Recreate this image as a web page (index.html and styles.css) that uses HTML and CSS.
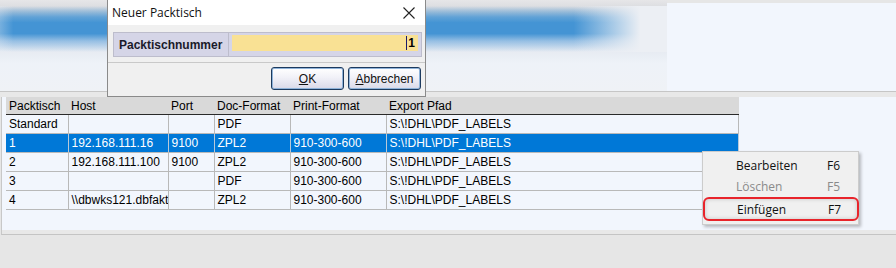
FILE: index.html
```html
<!DOCTYPE html>
<html lang="de">
<head>
    <meta charset="UTF-8">
    <title>Packtische</title>
    <link rel="stylesheet" href="styles.css">
</head>
<body>
    <div class="top">
        <div class="blur-area">
            <div class="blue-band"></div>
        </div>
        <div class="right-area"></div>
    </div>
    <div class="gap"></div>

    <div class="panel">
        <table class="grid">
            <colgroup>
                <col style="width:62px">
                <col style="width:100px">
                <col style="width:46px">
                <col style="width:76px">
                <col style="width:96px">
                <col style="width:352px">
            </colgroup>
            <thead>
                <tr>
                    <th>Packtisch</th>
                    <th>Host</th>
                    <th>Port</th>
                    <th>Doc-Format</th>
                    <th>Print-Format</th>
                    <th>Export Pfad</th>
                </tr>
            </thead>
            <tbody>
                <tr>
                    <td>Standard</td><td></td><td></td><td>PDF</td><td></td><td>S:\!DHL\PDF_LABELS</td>
                </tr>
                <tr class="selected">
                    <td>1</td><td>192.168.111.16</td><td>9100</td><td>ZPL2</td><td>910-300-600</td><td>S:\!DHL\PDF_LABELS</td>
                </tr>
                <tr>
                    <td>2</td><td>192.168.111.100</td><td>9100</td><td>ZPL2</td><td>910-300-600</td><td>S:\!DHL\PDF_LABELS</td>
                </tr>
                <tr>
                    <td>3</td><td></td><td></td><td>PDF</td><td>910-300-600</td><td>S:\!DHL\PDF_LABELS</td>
                </tr>
                <tr>
                    <td>4</td><td>\\dbwks121.dbfakt</td><td></td><td>ZPL2</td><td>910-300-600</td><td>S:\!DHL\PDF_LABELS</td>
                </tr>
            </tbody>
        </table>
    </div>
    <div class="panel-foot"></div>

    <!-- dialog over the page -->
    <div class="dialog">
        <div class="dialog-title">
            <span>Neuer Packtisch</span>
            <svg class="close" width="12" height="12" viewBox="0 0 12 12">
                <path d="M0.5 0.5 L11.5 11.5 M11.5 0.5 L0.5 11.5" stroke="#222" stroke-width="1.1" fill="none"/>
            </svg>
        </div>
        <div class="dialog-body">
            <div class="field">
                <div class="field-label">Packtischnummer</div>
                <div class="field-input-wrap">
                    <div class="field-input"><span class="caret"></span>1</div>
                </div>
            </div>
        </div>
        <div class="dialog-buttons">
            <button class="btn"><u>O</u>K</button>
            <button class="btn"><u>A</u>bbrechen</button>
        </div>
    </div>

    <!-- context menu -->
    <div class="menu">
        <div class="menu-item"><span class="menu-label">Bearbeiten</span><span>F6</span></div>
        <div class="menu-item disabled"><span class="menu-label">Löschen</span><span>F5</span></div>
        <div class="menu-item marked"><span class="menu-label">Einfügen</span><span>F7</span></div>
    </div>
</body>
</html>
```

FILE: styles.css
```css
/* Page */
body {
    margin: 0;
    width: 896px;
    height: 268px;
    overflow: hidden;
    position: relative;
    background: #e6e6e6;
    font-family: 'Liberation Sans', Arial, sans-serif;
    font-size: 12px;
    color: #000;
}

/* Blurred top area */
.top {
    display: flex;
    height: 91px;
    border-bottom: 1px solid #c6c6c6;
}

.blur-area {
    display: flex;
    width: 667px;
    padding-top: 6px;
    align-items: flex-start;
    background: linear-gradient(#e6e6e8 0%, #d3d6db 14%, #e3e8ef 50%, #eef2f8 70%, #eff2f6 100%);
}

.blue-band {
    width: 667px;
    height: 46px;
    background:
        linear-gradient(to right, rgba(236, 240, 246, 0.3) 0%, rgba(236, 240, 246, 0) 2%, rgba(236, 240, 246, 0) 86%, #eceff4 96%),
        linear-gradient(rgba(68, 148, 212, 0) 0%, rgba(68, 148, 212, 0.8) 24%, #4494d4 36%, #4494d4 60%, rgba(100, 165, 222, 0.6) 76%, rgba(120, 175, 225, 0) 100%);
}

.right-area {
    flex: 1;
    margin-top: 3px;
    background: #f2f6fd;
}

.gap {
    height: 5px;
    background: #e8e8e8;
}

/* Grid panel */
.panel {
    height: 133px;
    margin-left: 1px;
    padding-left: 4px;
    border-left: 1px solid #c8c8c8;
    background: #f2f6fd;
}

.panel-foot {
    height: 4px;
    margin-left: 1px;
    border-left: 1px solid #c8c8c8;
    border-bottom: 1px solid #c4c4c4;
    background: #e8e8e8;
}

.grid {
    border-collapse: collapse;
    table-layout: fixed;
    width: 732px;
}

.grid th {
    height: 17px;
    padding: 0 0 0 3px;
    background: #d9d9d9;
    border-bottom: 1px solid #2a2a2a;
    font-weight: normal;
    text-align: left;
    white-space: nowrap;
}

.grid th:last-child {
    border-right: 1px solid #d9d9d9;
}

.grid td {
    height: 18px;
    padding: 0 0 0 3px;
    border-right: 1px solid #b9b9b9;
    border-bottom: 1px solid #b9b9b9;
    white-space: nowrap;
    overflow: hidden;
}

.grid .selected td {
    background: #0078d7;
    color: #fff;
    border-right-color: #b9c9d8;
}

/* Dialog */
.dialog {
    position: absolute;
    left: 107px;
    top: 0;
    width: 317px;
    height: 96px;
    background: #f0f0f0;
    border: 1px solid #8a8a8a;
    border-top: none;
}

.dialog-title {
    display: flex;
    align-items: center;
    justify-content: space-between;
    height: 25px;
    padding: 0 10px 0 4px;
    background: #fff;
    font-family: 'Open Sans', sans-serif;
    font-size: 12px;
    color: #111;
}

.dialog-body {
    padding: 7px 3px 0 5px;
    height: 30px;
    border-bottom: 1px solid #c9c9c9;
}

.field {
    display: flex;
    height: 23px;
    border: 1px solid #bdbdcc;
    background: #d5d5e7;
}

.field-label {
    width: 109px;
    padding-left: 5px;
    display: flex;
    align-items: center;
    font-weight: bold;
    font-size: 12px;
    color: #1a1a2a;
    border-right: 1px solid #bdbdcc;
}

.field-input-wrap {
    flex: 1;
    padding: 2px 3px 3px 3px;
}

.field-input {
    height: 16px;
    background: #f9e194;
    display: flex;
    justify-content: flex-end;
    align-items: center;
    padding-right: 3px;
    font-weight: bold;
    font-size: 12px;
}

.caret {
    width: 1px;
    height: 14px;
    background: #1a1a6a;
    margin-right: 1px;
}

.dialog-buttons {
    display: flex;
    justify-content: flex-end;
    gap: 4px;
    padding: 4px 4px 0 0;
}

.btn {
    width: 73px;
    height: 23px;
    padding: 0;
    font-family: 'Liberation Sans', Arial, sans-serif;
    font-size: 12px;
    color: #111;
    border: 1px solid #1c3a5e;
    border-radius: 3px;
    background: linear-gradient(#ffffff 0%, #f1f1f8 45%, #d9d9e8 100%);
    box-shadow: inset 0 0 0 1px #8fb3d9;
}

/* Context menu */
.menu {
    position: absolute;
    left: 702px;
    top: 151px;
    width: 155px;
    padding: 3px 0 3px 0;
    background: #f0f0f0;
    border: 1px solid #cccccc;
    box-shadow: 2px 2px 3px rgba(0, 0, 0, 0.25);
    font-family: 'Open Sans', sans-serif;
    font-size: 12px;
}

.menu-item {
    display: flex;
    align-items: center;
    height: 21px;
    padding-left: 33px;
    color: #111;
}

.menu-label {
    width: 91px;
}

.menu-item.disabled {
    color: #8a8a8a;
}

.menu-item.marked {
    margin: 0 -1px 0 0;
    height: 20px;
    padding-left: 32px;
    border: 2px solid #e8242b;
    border-radius: 6px;
    box-shadow: inset 0 0 4px rgba(0, 0, 0, 0.18);
}
```
